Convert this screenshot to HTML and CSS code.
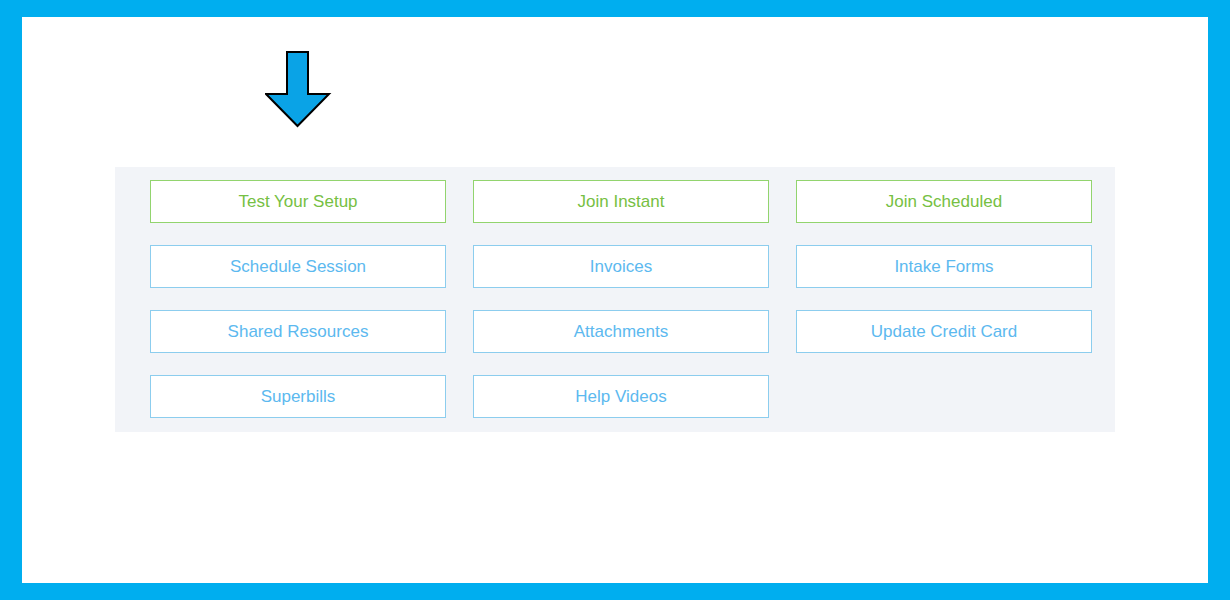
FILE: index.html
```html
<!DOCTYPE html>
<html lang="en">
<head>
    <meta charset="UTF-8">
    <meta name="viewport" content="width=device-width, initial-scale=1.0">
    <title>Client Portal</title>
    <link rel="stylesheet" href="styles.css">
</head>
<body>
    <div class="frame">
        <div class="arrow">
            <svg width="68" height="80" viewBox="0 0 68 80">
                <polygon points="22,2 43,2 43,44 64,44 32.5,76 1,44 22,44" fill="#0aa3e6" stroke="#000" stroke-width="2" stroke-linejoin="miter"/>
            </svg>
        </div>

        <div class="panel">
            <a class="btn green">Test Your Setup</a>
            <a class="btn green">Join Instant</a>
            <a class="btn green">Join Scheduled</a>
            <a class="btn">Schedule Session</a>
            <a class="btn">Invoices</a>
            <a class="btn">Intake Forms</a>
            <a class="btn">Shared Resources</a>
            <a class="btn">Attachments</a>
            <a class="btn">Update Credit Card</a>
            <a class="btn">Superbills</a>
            <a class="btn">Help Videos</a>
        </div>
    </div>
</body>
</html>
```

FILE: styles.css
```css
html, body {
    margin: 0;
    padding: 0;
}
body {
    font-family: "Liberation Sans", Arial, sans-serif;
    background-color: #00aeef;
    padding: 17px 22px;
    height: 600px;
    box-sizing: border-box;
}
.frame {
    background-color: #fff;
    height: 566px;
    padding-top: 33px;
    box-sizing: border-box;
}
.arrow {
    margin-left: 243px;
    height: 117px;
}
.arrow svg {
    display: block;
}
.panel {
    width: 1000px;
    margin-left: 93px;
    background-color: #f2f4f8;
    box-sizing: border-box;
    padding: 13px 24px 14px 35px;
    display: grid;
    grid-template-columns: repeat(3, 296px);
    column-gap: 27px;
    row-gap: 22px;
}
.btn {
    display: flex;
    align-items: center;
    justify-content: center;
    height: 43px;
    box-sizing: border-box;
    background-color: #fff;
    border: 1px solid #8ccdee;
    color: #5cb9ef;
    font-size: 17px;
    padding-top: 1px;
    cursor: pointer;
}
.btn.green {
    border-color: #92d46e;
    color: #76c043;
}
```
